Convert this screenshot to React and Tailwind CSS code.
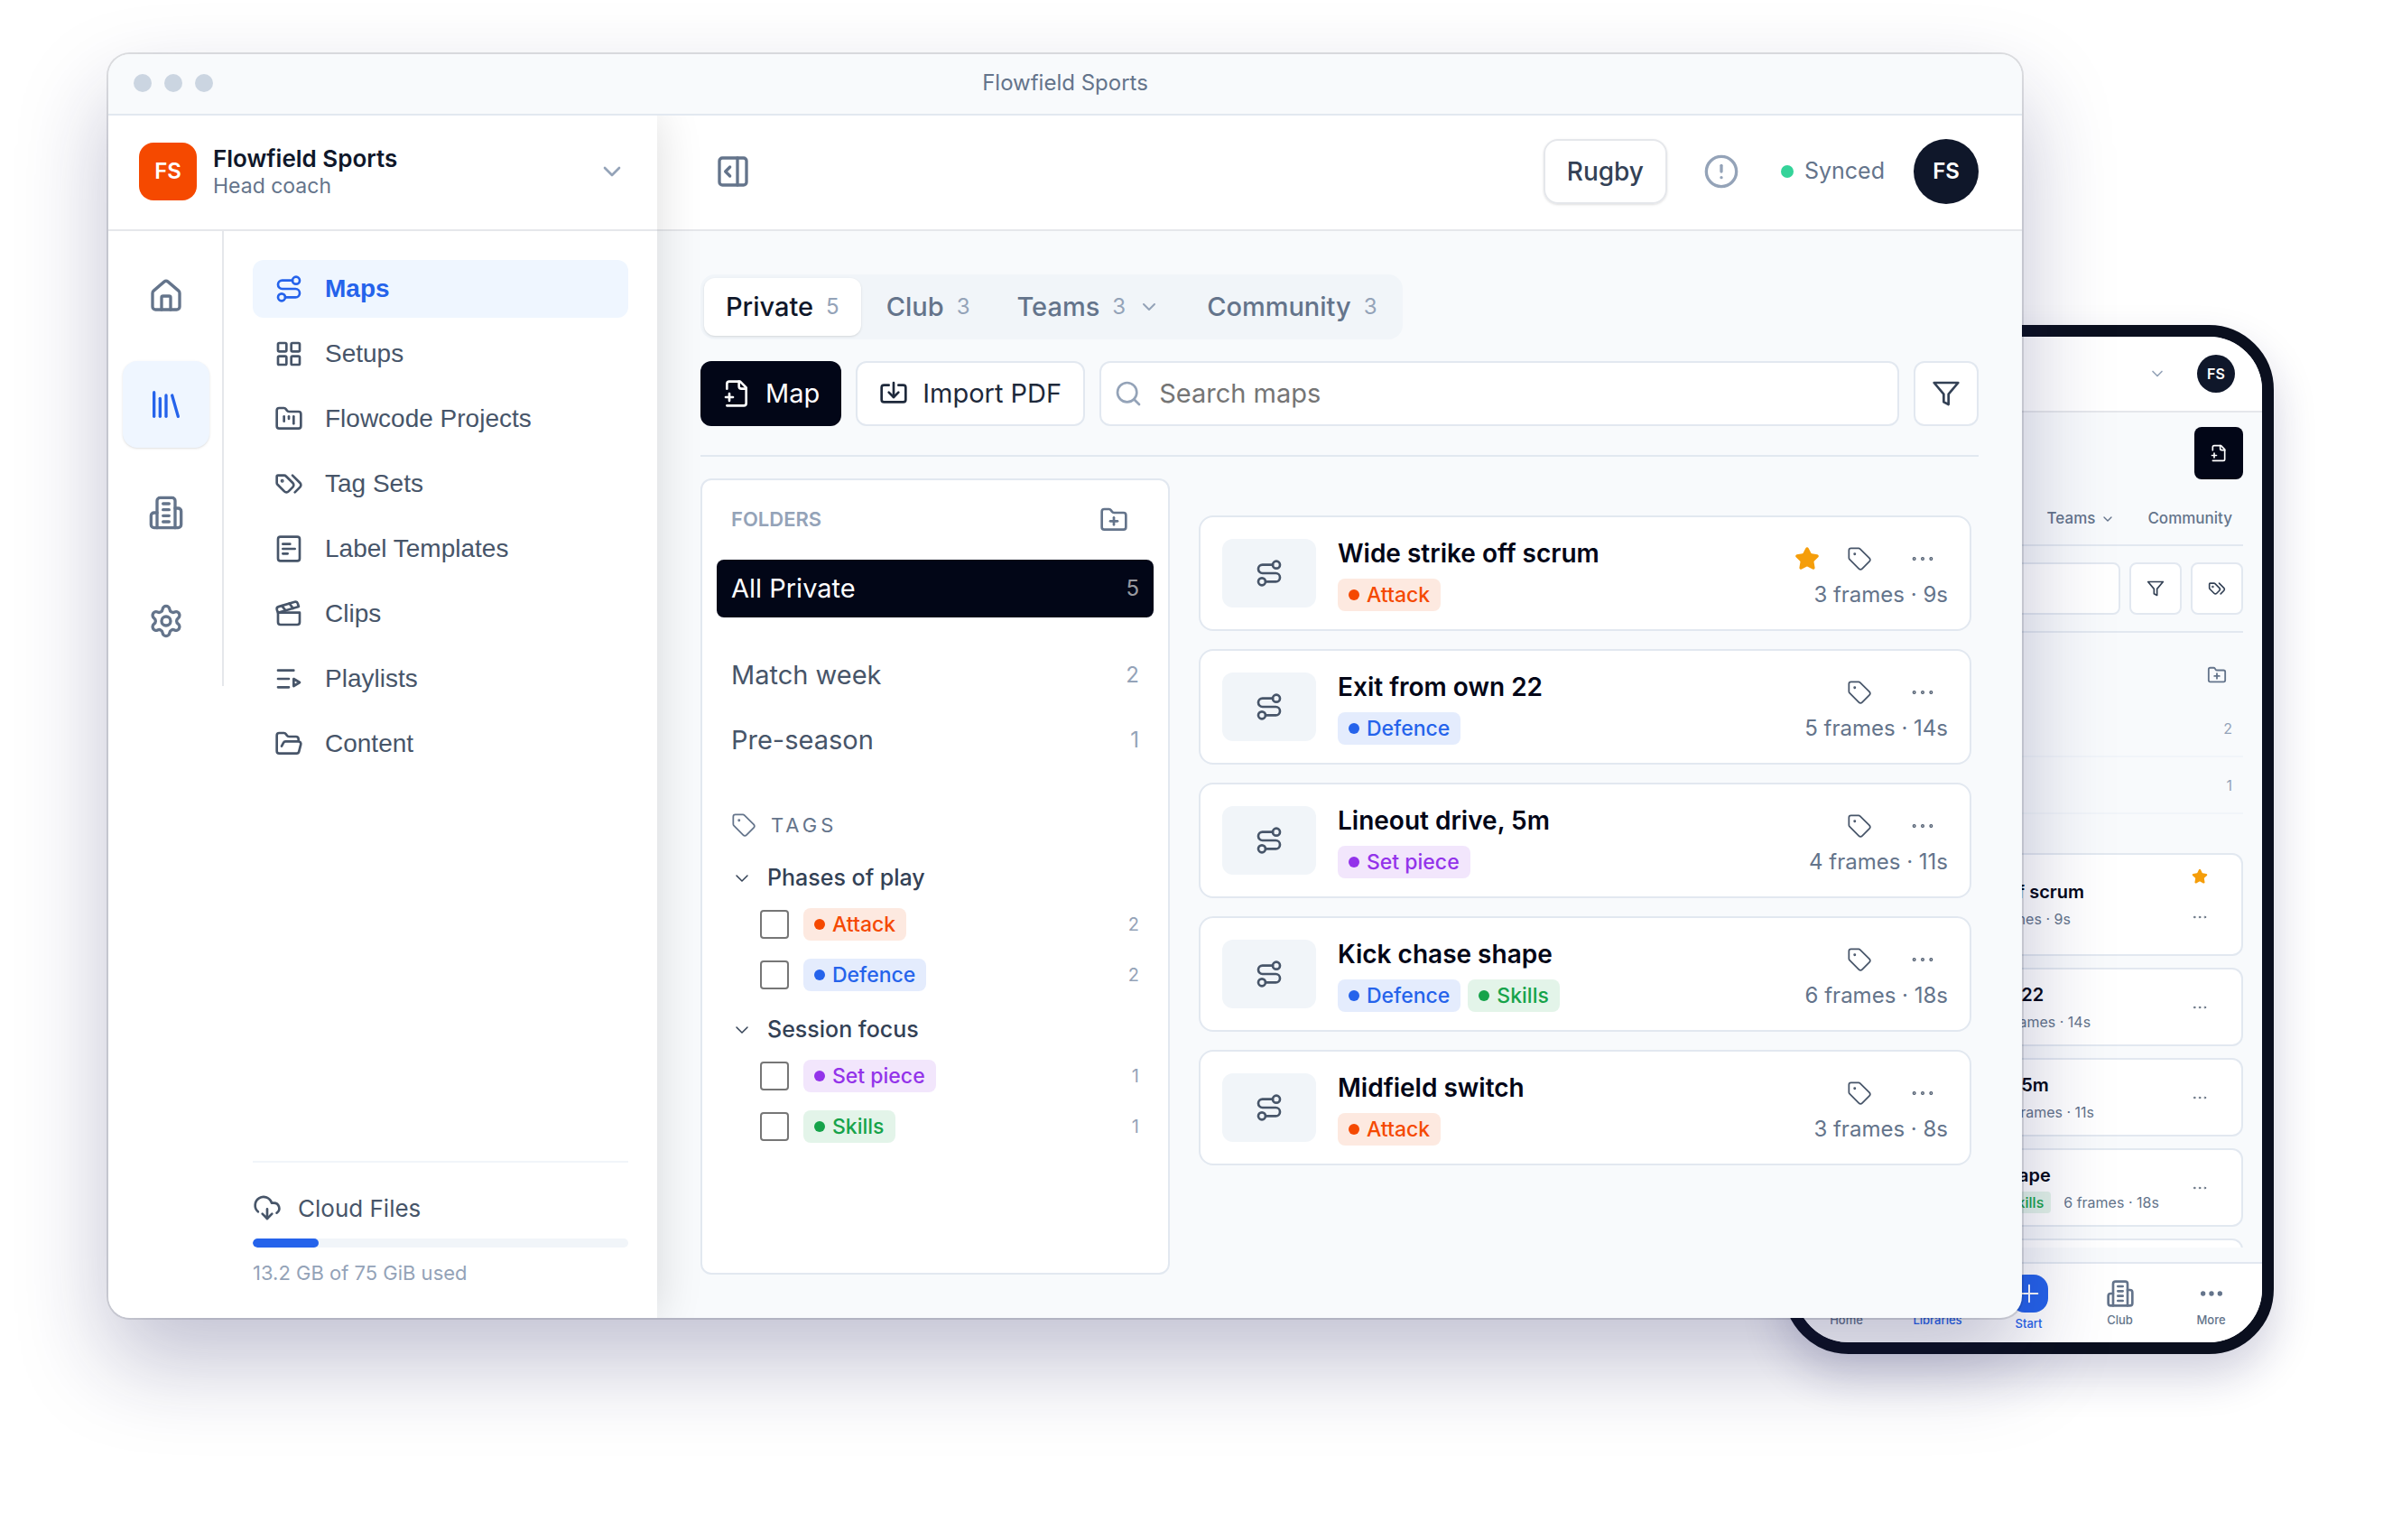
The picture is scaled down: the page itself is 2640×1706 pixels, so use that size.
import React, { useState } from 'react';
import {
  ChevronDown,
  CircleAlert,
  Clapperboard,
  CloudDownload,
  Ellipsis,
  FolderKanban,
  FolderOpen,
  FolderPlus,
  House,
  Import,
  LayoutGrid,
  Library,
  PanelRightOpen,
  Plus,
  Route,
  Search,
  Settings,
  Star,
  Tag,
} from 'lucide-react';

const navItems = [
  { name: 'Maps', icon: Route },
  { name: 'Setups', icon: LayoutGrid },
  { name: 'Flowcode Projects', icon: FolderKanban },
  { name: 'Tag Sets', icon: TagsIcon },
  { name: 'Label Templates', icon: LabelIcon },
  { name: 'Clips', icon: Clapperboard },
  { name: 'Playlists', icon: PlaylistIcon },
  { name: 'Content', icon: FolderOpen },
];

const railItems = [
  { name: 'Home', icon: House },
  { name: 'Libraries', icon: Library },
  { name: 'Club', icon: ClubIcon },
  { name: 'Settings', icon: Settings },
];

const tabs = [
  { name: 'Private', count: 5 },
  { name: 'Club', count: 3 },
  { name: 'Teams', count: 3, menu: true },
  { name: 'Community', count: 3 },
];

const folders = [
  { name: 'Match week', count: 2 },
  { name: 'Pre-season', count: 1 },
];

const tagGroups = [
  { name: 'Phases of play', tags: [{ name: 'Attack', count: 2 }, { name: 'Defence', count: 2 }] },
  { name: 'Session focus', tags: [{ name: 'Set piece', count: 1 }, { name: 'Skills', count: 1 }] },
];

const maps = [
  { name: 'Wide strike off scrum', tags: ['Attack'], info: '3 frames · 9s', starred: true },
  { name: 'Exit from own 22', tags: ['Defence'], info: '5 frames · 14s' },
  { name: 'Lineout drive, 5m', tags: ['Set piece'], info: '4 frames · 11s' },
  { name: 'Kick chase shape', tags: ['Defence', 'Skills'], info: '6 frames · 18s' },
  { name: 'Midfield switch', tags: ['Attack'], info: '3 frames · 8s' },
];

const tagColors = {
  Attack: 'bg-[#f54900]/12 text-[#f54900]',
  Defence: 'bg-[#2563eb]/12 text-[#2563eb]',
  'Set piece': 'bg-[#9333ea]/12 text-[#9333ea]',
  Skills: 'bg-[#16a34a]/12 text-[#16a34a]',
};

function Svg({ className, strokeWidth = 2, children }) {
  return (
    <svg
      className={className}
      viewBox="0 0 24 24"
      fill="none"
      stroke="currentColor"
      strokeWidth={strokeWidth}
      strokeLinecap="round"
      strokeLinejoin="round"
      aria-hidden="true"
    >
      {children}
    </svg>
  );
}

function LabelIcon(props) {
  return (
    <Svg {...props}>
      <rect x="3" y="2" width="18" height="20" rx="2" />
      <path d="M7 8h6M7 12h10M7 16h4" />
    </Svg>
  );
}

function TagsIcon(props) {
  return (
    <Svg {...props}>
      <path d="m15 5 6.3 6.3a2.4 2.4 0 0 1 0 3.4L17 19" />
      <path d="M9.586 5.586A2 2 0 0 0 8.172 5H3a1 1 0 0 0-1 1v5.172a2 2 0 0 0 .586 1.414L8.29 18.29a2.426 2.426 0 0 0 3.42 0l3.58-3.58a2.426 2.426 0 0 0 0-3.42z" />
      <circle cx="6.5" cy="9.5" r=".5" fill="currentColor" />
    </Svg>
  );
}

function PlaylistIcon(props) {
  return (
    <Svg {...props}>
      <path d="M3 5h13M3 12h9M3 19h9" />
      <path d="m16 12 5 3-5 3z" />
    </Svg>
  );
}

function ClubIcon(props) {
  return (
    <Svg {...props}>
      <path d="M6 22V4a2 2 0 0 1 2-2h8a2 2 0 0 1 2 2v18Z" />
      <path d="M6 12H4a2 2 0 0 0-2 2v6a2 2 0 0 0 2 2h2" />
      <path d="M18 9h2a2 2 0 0 1 2 2v9a2 2 0 0 1-2 2h-2" />
      <path d="M10 6h4M10 10h4M10 14h4M10 18h4" />
    </Svg>
  );
}

function FilePlusIcon(props) {
  return (
    <Svg {...props}>
      <path d="M4 22h14a2 2 0 0 0 2-2V7l-5-5H6a2 2 0 0 0-2 2v4" />
      <path d="M14 2v4a2 2 0 0 0 2 2h4" />
      <path d="M3 15h6M6 12v6" />
    </Svg>
  );
}

function FilterIcon(props) {
  return (
    <Svg {...props}>
      <polygon points="22 3 2 3 10 12.46 10 19 14 21 14 12.46 22 3" />
    </Svg>
  );
}

function TagPill({ name }) {
  return (
    <span className={`flex h-9 items-center gap-2 rounded-lg px-3 text-[23px] leading-8 font-medium ${tagColors[name]}`}>
      <span className="size-3 rounded-full bg-current" />
      {name}
    </span>
  );
}

function Sidebar() {
  return (
    <aside className="relative z-10 flex w-[608px] shrink-0 flex-col bg-white shadow-[0_0_48px_rgba(0,0,0,0.14)]">
      <button type="button" className="flex h-32 items-center gap-[18px] border-b-2 border-[#e5e7eb] px-[34px] pb-0.5 text-left">
        <span className="flex size-16 items-center justify-center rounded-2xl bg-[#f54900] text-2xl font-semibold text-white">FS</span>
        <span className="flex flex-1 flex-col">
          <span className="text-[26px] leading-8 font-semibold text-[#0f172a]">Flowfield Sports</span>
          <span className="text-[23px] leading-7 text-[#64748b]">Head coach</span>
        </span>
        <ChevronDown className="size-8 text-[#94a3b8]" />
      </button>
      <div className="flex flex-1">
        <nav aria-label="Sections" className="flex w-32 flex-col gap-6 self-start border-r-2 border-[#e5e7eb] py-6 pl-4">
          {railItems.map(({ name, icon: Icon }) => (
            <a
              key={name}
              href="#"
              aria-label={name}
              className={`flex size-24 items-center justify-center rounded-2xl ${name === 'Libraries' ? 'bg-[#eff6ff] text-[#2563eb] shadow-sm' : 'text-[#64748b]'}`}
            >
              <Icon className="size-10" />
            </a>
          ))}
        </nav>
        <div className="flex flex-1 flex-col p-8">
          <nav aria-label="Libraries" className="flex flex-col gap-2 font-['Liberation_Sans',sans-serif] text-[28px]">
            {navItems.map(({ name, icon: Icon }) => (
              <a
                key={name}
                href="#"
                className={`flex h-16 items-center gap-6 rounded-xl px-6 ${name === 'Maps' ? 'bg-[#eff6ff] font-bold text-[#2563eb]' : 'text-[#475569]'}`}
              >
                <Icon className="size-8" />
                {name}
              </a>
            ))}
          </nav>
          <div className="mt-auto border-t-2 border-[#f1f5f9] pt-8 text-[#475569]">
            <div className="flex h-9 items-center gap-[18px] text-[26px]">
              <CloudDownload className="size-8" />
              Cloud Files
            </div>
            <div className="mt-4 h-2.5 overflow-hidden rounded-full bg-[#f1f5f9]">
              <div className="h-full rounded-full bg-[#2563eb]" style={{ width: `${(13.2 / 75) * 100}%` }} />
            </div>
            <p className="mt-2.5 text-[22px] leading-9 text-[#94a3b8]">13.2 GB of 75 GiB used</p>
          </div>
        </div>
      </div>
    </aside>
  );
}

function TopBar() {
  return (
    <header className="flex h-32 items-center border-b-2 border-[#e5e7eb] bg-white px-12 pb-0.5">
      <button type="button" aria-label="Collapse sidebar" className="flex size-[72px] items-center justify-center text-[#64748b]">
        <PanelRightOpen className="size-10" />
      </button>
      <button type="button" className="ml-auto h-[72px] rounded-2xl border-2 border-[#e5e7eb] px-6 text-[28px] font-medium text-[#334155] shadow-sm">
        Rugby
      </button>
      <button type="button" aria-label="Alerts" className="ml-6 flex size-[72px] items-center justify-center text-[#94a3b8]">
        <CircleAlert className="size-10" />
      </button>
      <span className="ml-[30px] flex items-center gap-3 text-[25px] text-[#64748b]">
        <span className="size-3.5 rounded-full bg-[#34d399]" />
        Synced
      </span>
      <button type="button" className="ml-8 size-[72px] rounded-full bg-[#0f172a] text-2xl font-semibold text-white">
        FS
      </button>
    </header>
  );
}

function Toolbar({ search, setSearch }) {
  return (
    <div className="mt-6 flex gap-4 border-b-2 border-[#e2e8f0] pb-8 text-[29px]">
      <button type="button" className="flex h-[72px] items-center gap-4 rounded-xl bg-[#020617] px-6 text-white">
        <FilePlusIcon className="size-8" />
        Map
      </button>
      <button type="button" className="flex h-[72px] items-center gap-4 rounded-xl border-2 border-[#e2e8f0] bg-white px-6 text-[#1e293b]">
        <Import className="size-8" />
        Import PDF
      </button>
      <label className="flex h-[72px] min-w-0 flex-1 items-center gap-[18px] rounded-xl border-2 border-[#e2e8f0] bg-white px-3.5">
        <Search className="size-8 text-[#94a3b8]" />
        <input
          type="text"
          aria-label="Search maps"
          placeholder="Search maps"
          value={search}
          onChange={(e) => setSearch(e.target.value)}
          className="min-w-0 flex-1 outline-none placeholder:text-[#757575]"
        />
      </label>
      <button type="button" aria-label="Filter" className="flex size-[72px] items-center justify-center rounded-xl border-2 border-[#e2e8f0] bg-white text-[#334155]">
        <FilterIcon className="size-8" />
      </button>
    </div>
  );
}

function FolderPanel() {
  return (
    <section className="w-[520px] shrink-0 rounded-xl border-2 border-[#e2e8f0] bg-white px-4">
      <div className="flex h-[88px] items-center justify-between pr-7 pl-4">
        <h2 className="pb-0.5 text-[22px] font-semibold text-[#94a3b8]">FOLDERS</h2>
        <button type="button" aria-label="New folder" className="text-[#64748b]">
          <FolderPlus className="size-8" />
        </button>
      </div>
      <button type="button" className="flex h-16 w-full items-center justify-between rounded-lg bg-[#020617] px-4 text-[29px] text-white">
        All Private
        <span className="text-2xl text-white/60">5</span>
      </button>
      <div className="mt-8 flex flex-col gap-2">
        {folders.map((folder) => (
          <button key={folder.name} type="button" className="flex h-16 items-center justify-between px-4 text-[29px] text-[#475569]">
            {folder.name}
            <span className="text-2xl text-[#94a3b8]">{folder.count}</span>
          </button>
        ))}
      </div>
      <div className="mt-10 flex h-12 items-center gap-4 pb-1 pl-4 text-[22px] tracking-[4px] text-[#64748b]">
        <Tag className="size-7" strokeWidth={1.5} />
        TAGS
      </div>
      <div className="mt-2 flex flex-col gap-2">
        {tagGroups.map((group) => (
          <div key={group.name}>
            <button type="button" className="flex h-12 items-center gap-4 pt-0.5 pl-4 text-[25px] font-medium text-[#334155]">
              <ChevronDown className="size-6" strokeWidth={1.5} />
              {group.name}
            </button>
            {group.tags.map((tag) => (
              <label key={tag.name} className="flex h-14 items-center gap-4 pr-4 pl-12">
                <input type="checkbox" className="size-8 appearance-none rounded border-2 border-[#767676] bg-white checked:bg-[#2563eb]" />
                <TagPill name={tag.name} />
                <span className="ml-auto text-xl text-[#94a3b8]">{tag.count}</span>
              </label>
            ))}
          </div>
        ))}
      </div>
    </section>
  );
}

function MapCard({ map }) {
  return (
    <article className="flex h-32 items-center gap-6 rounded-2xl border-2 border-[#e2e8f0] bg-white px-6">
      <div className="flex h-[76px] w-[104px] items-center justify-center rounded-xl bg-[#f1f5f9] text-[#475569]">
        <Route className="size-8" />
      </div>
      <div className="flex-1">
        <h3 className="text-[28px] leading-10 font-semibold text-[#020617]">{map.name}</h3>
        <div className="mt-2 flex gap-2">
          {map.tags.map((tag) => (
            <TagPill key={tag} name={tag} />
          ))}
        </div>
      </div>
      <div className="flex flex-col items-end">
        <div className="flex h-12 items-center gap-4 pt-1 pr-3 text-[#475569]">
          {map.starred && <Star className="mr-3.5 size-7 fill-current text-[#f59e0b]" />}
          <button type="button" aria-label="Edit tags">
            <Tag className="size-7" strokeWidth={1.5} />
          </button>
          <button type="button" aria-label="More" className="ml-6">
            <Ellipsis className="size-8" strokeWidth={1} />
          </button>
        </div>
        <p className="text-2xl leading-9 text-[#64748b]">{map.info}</p>
      </div>
    </article>
  );
}

function DesktopWindow() {
  const [activeTab, setActiveTab] = useState('Private');
  const [search, setSearch] = useState('');

  return (
    <div className="relative flex min-h-[1400px] flex-col overflow-hidden rounded-3xl bg-[#f8fafc] shadow-[0_0_0_2px_rgba(15,23,42,0.13),0_48px_100px_rgba(25,25,90,0.27)]">
      <div className="relative z-20 flex h-[68px] items-center border-b-2 border-[#e2e8f0] bg-[#f8fafc] px-7 pb-0.5">
        <div className="flex flex-1 gap-3.5">
          <span className="size-5 rounded-full bg-[#cbd5e1]" />
          <span className="size-5 rounded-full bg-[#cbd5e1]" />
          <span className="size-5 rounded-full bg-[#cbd5e1]" />
        </div>
        <p className="text-2xl text-[#64748b]">Flowfield Sports</p>
        <div className="flex-1" />
      </div>
      <div className="flex flex-1">
        <Sidebar />
        <div className="flex min-w-0 flex-1 flex-col">
          <TopBar />
          <main className="flex flex-1 flex-col p-12">
            <div className="flex gap-1 self-start rounded-2xl bg-[#f1f5f9] p-1">
              {tabs.map((tab) => (
                <button
                  key={tab.name}
                  type="button"
                  onClick={() => setActiveTab(tab.name)}
                  className={`flex h-16 items-center gap-3.5 rounded-xl px-6 text-[29px] font-medium ${activeTab === tab.name ? 'bg-white text-[#0f172a] shadow-sm' : 'text-[#64748b]'}`}
                >
                  {tab.name}
                  <span className="text-2xl font-normal text-[#94a3b8]">{tab.count}</span>
                  {tab.menu && <ChevronDown className="size-6 text-[#94a3b8]" />}
                </button>
              ))}
            </div>
            <Toolbar search={search} setSearch={setSearch} />
            <div className="mt-6 flex flex-1 gap-8">
              <FolderPanel />
              <div className="flex flex-1 flex-col gap-5 pt-[41px] pr-2">
                {maps.map((map) => (
                  <MapCard key={map.name} map={map} />
                ))}
              </div>
            </div>
          </main>
        </div>
      </div>
    </div>
  );
}

function Phone() {
  return (
    <div className="absolute top-[360px] right-[121px] flex h-[1140px] w-[543px] flex-col overflow-hidden rounded-[72px] border-[13px] border-[#0a0f1e] bg-[#f8fafc] shadow-[0_24px_48px_rgba(25,25,90,0.2)]">
      <div className="flex h-[84px] shrink-0 items-center justify-end gap-[34px] border-b-2 border-[#e5e7eb] bg-white pr-[30px]">
        <ChevronDown className="size-5 text-[#94a3b8]" />
        <span className="flex size-[42px] items-center justify-center rounded-full bg-[#0f172a] text-base font-semibold text-white">FS</span>
      </div>
      <div className="flex min-h-0 flex-1 flex-col overflow-hidden px-[21px] pt-4">
        <button type="button" aria-label="New map" className="flex h-[58px] w-[54px] shrink-0 items-center justify-center self-end rounded-lg bg-[#020617] text-white">
          <FilePlusIcon className="size-5" />
        </button>
        <div className="flex h-[74px] shrink-0 items-center justify-end gap-9 border-b-2 border-[#e2e8f0] pt-4 pr-3 text-[17px] font-medium text-[#64748b]">
          <button type="button" className="flex items-center gap-1.5">
            Teams
            <ChevronDown className="size-4" />
          </button>
          <button type="button">Community</button>
        </div>
        <div className="flex h-24 shrink-0 items-center gap-2.5 border-b-2 border-[#e2e8f0]">
          <input type="text" aria-label="Search" className="h-[58px] min-w-0 flex-1 rounded-lg border-2 border-[#e2e8f0] bg-white" />
          <button type="button" aria-label="Filter" className="flex size-[58px] items-center justify-center rounded-lg border-2 border-[#e2e8f0] bg-white text-[#334155]">
            <FilterIcon className="size-5" />
          </button>
          <button type="button" aria-label="Tags" className="flex size-[58px] items-center justify-center rounded-lg border-2 border-[#e2e8f0] bg-white text-[#334155]">
            <TagsIcon className="size-5" />
          </button>
        </div>
        <div className="flex h-[75px] shrink-0 items-end justify-end pr-[18px] pb-[17px]">
          <FolderPlus className="size-[22px] text-[#64748b]" />
        </div>
        {folders.map((folder) => (
          <div key={folder.name} className="flex h-[63px] shrink-0 items-center justify-end border-b-2 border-[#f1f5f9] pr-3 text-base text-[#94a3b8]">
            {folder.count}
          </div>
        ))}
        <div className="mt-[43px] mb-4 flex min-h-0 flex-1 flex-col gap-[13px] overflow-hidden">
          {maps.map((map) => (
            <div
              key={map.name}
              className={`flex shrink-0 items-center justify-between rounded-xl border-2 border-[#e2e8f0] bg-white pr-9 pl-[90px] ${map.starred ? 'h-[114px]' : 'h-[87px]'}`}
            >
              <div>
                <h4 className="text-xl leading-7 font-semibold text-[#020617]">{map.name}</h4>
                <div className="mt-1 flex items-center gap-1.5 text-base leading-6 text-[#64748b]">
                  {map.tags.map((tag) => (
                    <span key={tag} className={`flex h-6 items-center gap-1.5 rounded px-2 font-medium ${tagColors[tag]}`}>
                      <span className="size-2 rounded-full bg-current" />
                      {tag}
                    </span>
                  ))}
                  <span className="ml-2">{map.info}</span>
                </div>
              </div>
              <div className={`flex flex-col items-center gap-[26px] text-[#475569] ${map.starred ? 'pb-4' : ''}`}>
                {map.starred && <Star className="size-[18px] fill-current text-[#f59e0b]" />}
                <Ellipsis className="size-5" strokeWidth={1} />
              </div>
            </div>
          ))}
        </div>
      </div>
      <nav aria-label="Phone" className="grid h-[89px] shrink-0 grid-cols-5 border-t-2 border-[#e2e8f0] bg-white px-1.5 pt-3 text-[13px] leading-4 font-medium text-[#64748b]">
        <a href="#" className="flex flex-col items-center">
          <House className="h-[42px] w-8" />
          Home
        </a>
        <a href="#" className="flex flex-col items-center text-[#2563eb]">
          <Library className="h-[42px] w-8" />
          Libraries
        </a>
        <a href="#" className="flex flex-col items-center gap-1 text-[#2563eb]">
          <span className="flex size-[42px] items-center justify-center rounded-2xl bg-[#2563eb] text-white">
            <Plus className="size-8" strokeWidth={1.5} />
          </span>
          Start
        </a>
        <a href="#" className="flex flex-col items-center">
          <ClubIcon className="h-[42px] w-8" />
          Club
        </a>
        <a href="#" className="flex flex-col items-center">
          <Ellipsis className="h-[42px] w-8" />
          More
        </a>
      </nav>
    </div>
  );
}

function App() {
  return (
    <div className="relative min-h-screen overflow-hidden bg-white pt-[60px] pr-[400px] pb-[120px] pl-[120px] font-[Inter,sans-serif]">
      <Phone />
      <DesktopWindow />
    </div>
  );
}

export default App;
